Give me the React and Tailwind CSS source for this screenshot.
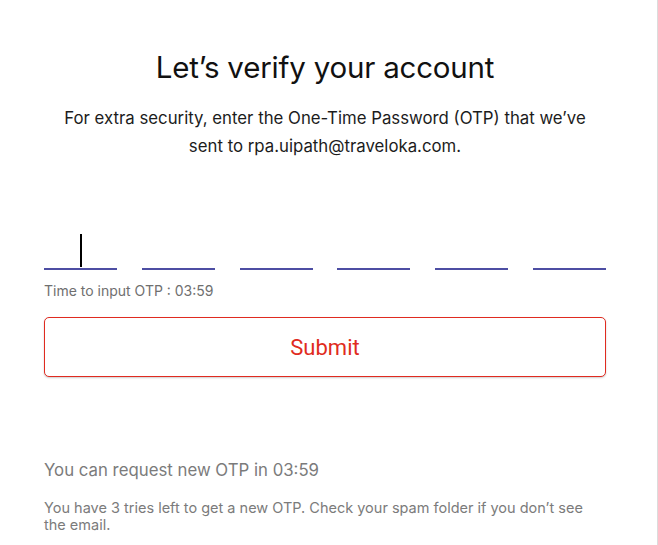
import React from "react";

const BOXES = [0, 1, 2, 3, 4, 5];

export default function App() {
  return (
    <div className="w-[658px] h-[545px] bg-white overflow-hidden flex font-['Inter',sans-serif]">
      <div className="w-[657px] flex flex-col pl-[44px] pr-[51px]">
        {/* Header */}
        <h1 className="mt-[48px] text-center text-[29.5px] leading-[38px] font-normal text-[#111] tracking-[-0.2px]">
          Let’s verify your account
        </h1>
        <p className="mt-[18px] text-center text-[16.8px] leading-[28px] text-[#1c1c1c] px-[14px]">
          For extra security, enter the One-Time Password (OTP) that we’ve sent to rpa.uipath@traveloka.com.
        </p>

        {/* OTP inputs */}
        <div className="mt-[72px] flex justify-between">
          {BOXES.map((i) => (
            <div
              key={i}
              className="w-[73px] h-[38px] border-b-[2px] border-[#4d4ea3] flex justify-center items-end pb-[1px]"
            >
              {i === 0 && <div className="w-[2px] h-[33px] bg-black" />}
            </div>
          ))}
        </div>
        <div className="mt-[12px] text-[14px] leading-[18px] text-[#6f6f6f]">
          Time to input OTP : 03:59
        </div>

        {/* Submit */}
        <button className="mt-[17px] h-[60px] w-full rounded-[5px] border border-[#e02b20] bg-white shadow-[0_1px_2px_rgba(0,0,0,0.2)] text-[#e02b20] text-[22px] font-['Roboto',sans-serif]">
          Submit
        </button>

        {/* Resend */}
        <div className="mt-[82px] text-[16.8px] leading-[22px] text-[#7b7b7b]">
          You can request new OTP in 03:59
        </div>
        <div className="mt-[18px] text-[14.5px] leading-[17px] text-[#7b7b7b] pr-[10px]">
          You have 3 tries left to get a new OTP. Check your spam folder if you don’t see the email.
        </div>
      </div>
      <div className="w-[1px] h-full bg-[#dcdcdc]" />
    </div>
  );
}
